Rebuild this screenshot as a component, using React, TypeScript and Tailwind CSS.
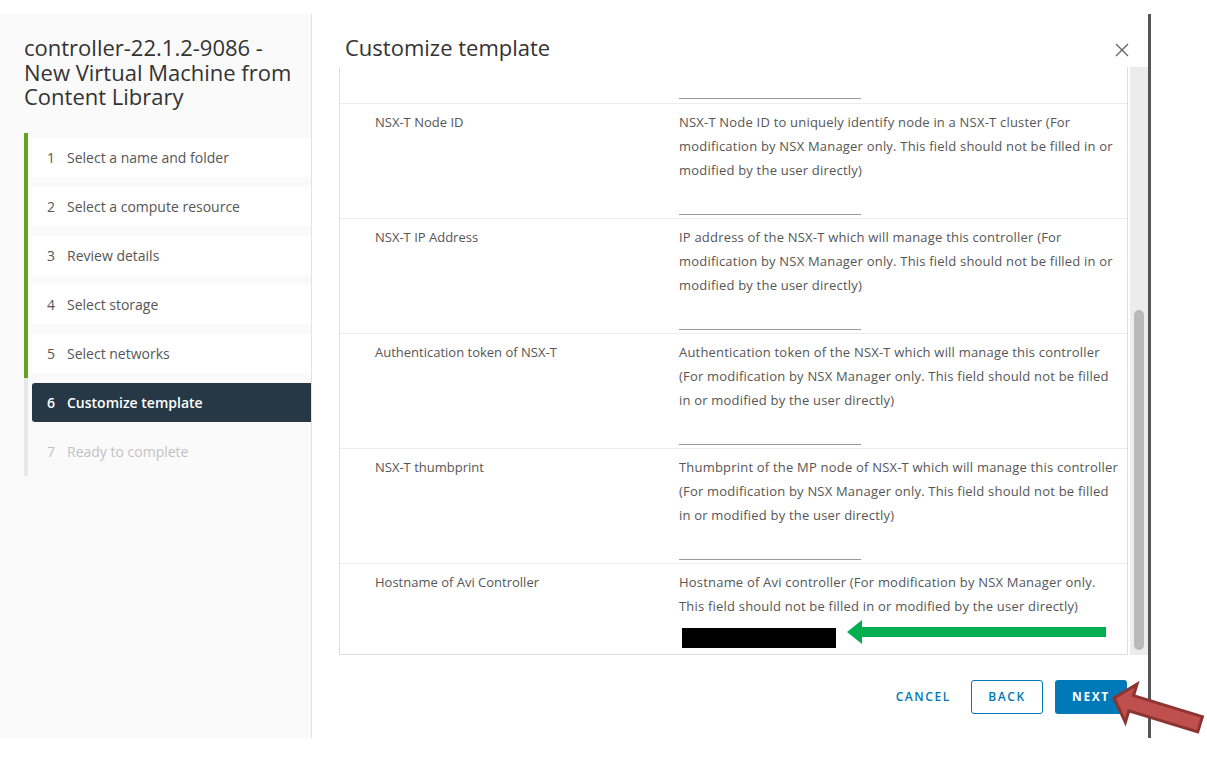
import React from "react";

const steps = [
  { n: 1, label: "Select a name and folder", state: "done" },
  { n: 2, label: "Select a compute resource", state: "done" },
  { n: 3, label: "Review details", state: "done" },
  { n: 4, label: "Select storage", state: "done" },
  { n: 5, label: "Select networks", state: "done" },
  { n: 6, label: "Customize template", state: "active" },
  { n: 7, label: "Ready to complete", state: "todo" },
];

const fields = [
  {
    label: "NSX-T Node ID",
    desc: [
      "NSX-T Node ID to uniquely identify node in a NSX-T cluster (For",
      "modification by NSX Manager only. This field should not be filled in or",
      "modified by the user directly)",
    ],
  },
  {
    label: "NSX-T IP Address",
    desc: [
      "IP address of the NSX-T which will manage this controller (For",
      "modification by NSX Manager only. This field should not be filled in or",
      "modified by the user directly)",
    ],
  },
  {
    label: "Authentication token of NSX-T",
    desc: [
      "Authentication token of the NSX-T which will manage this controller",
      "(For modification by NSX Manager only. This field should not be filled",
      "in or modified by the user directly)",
    ],
  },
  {
    label: "NSX-T thumbprint",
    desc: [
      "Thumbprint of the MP node of NSX-T which will manage this controller",
      "(For modification by NSX Manager only. This field should not be filled",
      "in or modified by the user directly)",
    ],
  },
  {
    label: "Hostname of Avi Controller",
    desc: [
      "Hostname of Avi controller (For modification by NSX Manager only.",
      "This field should not be filled in or modified by the user directly)",
    ],
    filled: true,
  },
];

function StepItem({ n, label, state }: { n: number; label: string; state: string }) {
  const bar = state === "done" ? "border-[#62a420]" : "border-[#e8e8e8]";
  const box =
    state === "active"
      ? "bg-[#263845] text-white font-semibold rounded-l-[3px]"
      : state === "done"
      ? "bg-white text-[#565656]"
      : "text-[#c2c2c2]";
  return (
    <div className={`h-[49px] border-l-4 ${bar} pl-[4px] py-[5px]`}>
      <div className={`h-[39px] flex items-center pl-[15px] text-[14px] ${box}`}>
        <span className="w-[20px]">{n}</span>
        <span>{label}</span>
      </div>
    </div>
  );
}

export default function App() {
  return (
    <div
      className="relative w-[1207px] h-[757px] bg-white pt-[14px] overflow-hidden"
      style={{ fontFamily: "'Open Sans', Lato, sans-serif" }}
    >
      <div className="flex h-[724px]">
        {/* Left: wizard steps */}
        <div className="w-[312px] shrink-0 bg-[#fafafa] border-r border-[#e2e2e2] pt-[21px]">
          <h1 className="pl-[24px] pr-[10px] text-[22px] leading-[24.5px] text-[#333]">
            controller-22.1.2-9086 -<br />
            New Virtual Machine from<br />
            Content Library
          </h1>
          <div className="mt-[24px] ml-[24px]">
            {steps.map((s) => (
              <StepItem key={s.n} {...s} />
            ))}
          </div>
        </div>

        {/* Right: step content */}
        <div className="w-[839px] shrink-0 border-r-[3px] border-[#555] flex flex-col pl-[27px]">
          <div className="flex items-center justify-between pt-[13px] h-[53px]">
            <h2 className="ml-[6px] text-[22px] leading-[28px] text-[#333]">Customize template</h2>
            <svg width="14" height="14" viewBox="0 0 14 14" className="mr-[19px] mt-[6px]">
              <path d="M1 1 L13 13 M13 1 L1 13" stroke="#666" strokeWidth="1.4" fill="none" />
            </svg>
          </div>

          <div className="flex gap-[2px]">
            <div className="w-[791px] h-[588px] border-l border-r border-b border-[#dedede] overflow-hidden text-[13px] leading-[24px] text-[#565656]">
              <div className="h-[37px] border-b border-[#ececec] pl-[339px] pb-[4px] flex items-end">
                <div className="w-[182px] border-b border-[#9a9a9a]" />
              </div>
              {fields.map((f) => (
                <div key={f.label} className="flex h-[115px] border-b border-[#ececec] pl-[35px] pt-[6px]">
                  <div className="w-[304px] shrink-0">{f.label}</div>
                  <div className="tracking-[0.2px]">
                    {f.desc.map((line) => (
                      <div key={line} className="whitespace-nowrap">
                        {line}
                      </div>
                    ))}
                    <div
                      className={`w-[182px] h-[33px] border-b ${
                        f.filled ? "border-[#3d9fd6]" : "border-[#9a9a9a]"
                      }`}
                    >
                      {f.filled && <div className="ml-[3px] mt-[10px] w-[154px] h-[20px] bg-black" />}
                    </div>
                  </div>
                </div>
              ))}
            </div>
            <div className="w-[18px] h-[588px] bg-[#ececec] pt-[243px] flex justify-center">
              <div className="w-[10px] h-[340px] rounded-full bg-[#b9b9b9]" />
            </div>
          </div>

          <div className="flex justify-end items-center mt-[25px] pr-[21px] text-[12px] font-semibold tracking-[1.6px]">
            <button className="h-[34px] px-[12px] text-[#0079b8]">CANCEL</button>
            <button className="ml-[8px] w-[72px] h-[34px] rounded-[3px] border border-[#0079b8] text-[#0079b8]">
              BACK
            </button>
            <button className="ml-[12px] w-[72px] h-[34px] rounded-[3px] bg-[#0079b8] text-white font-bold">
              NEXT
            </button>
          </div>
        </div>
      </div>

      {/* green annotation arrow */}
      <svg className="absolute left-[846px] top-[618px]" width="262" height="28" viewBox="0 0 262 28">
        <rect x="15" y="9" width="245" height="10" fill="#00b050" />
        <polygon points="1,14 16,2 16,26" fill="#00b050" />
      </svg>

      {/* red annotation arrow */}
      <svg className="absolute left-[1100px] top-[675px]" width="107" height="70" viewBox="0 0 107 70">
        <g transform="translate(14 23) rotate(17)">
          <polygon
            points="0,0 18,-20 18,-8 90,-8 90,8 18,8 18,20"
            fill="#c0504d"
            stroke="#8c3431"
            strokeWidth="3"
          />
        </g>
      </svg>
    </div>
  );
}
